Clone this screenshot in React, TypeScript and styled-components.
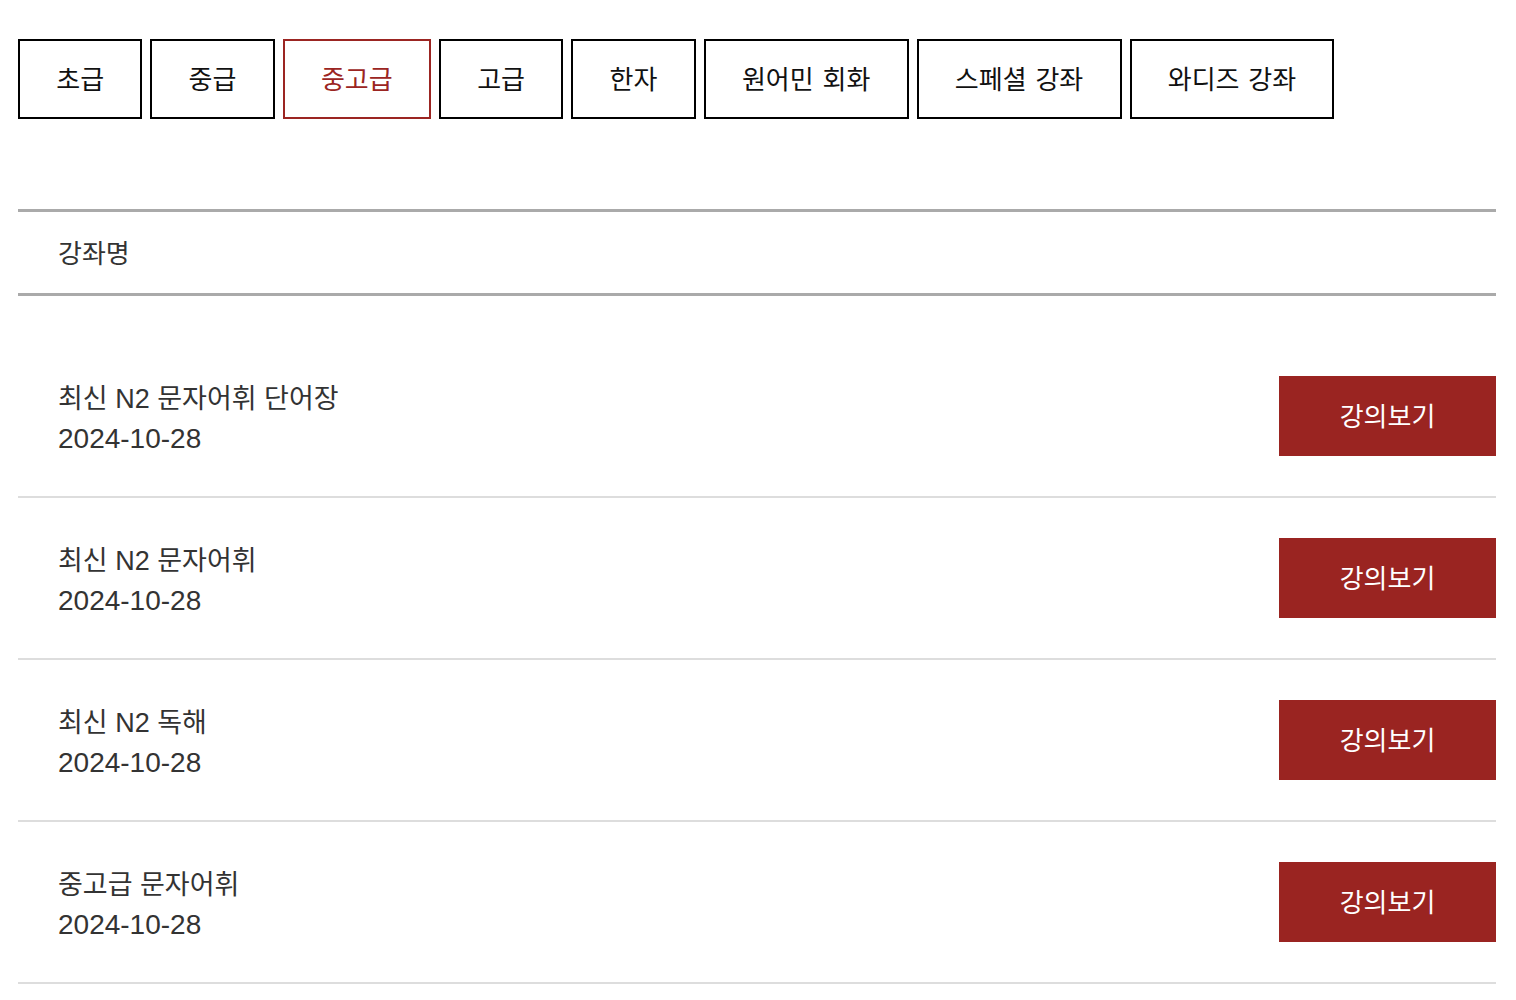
import React, { useState } from "react";
import styled, { createGlobalStyle } from "styled-components";

const GlobalStyle = createGlobalStyle`
  body {
    margin: 0;
    background: #fff;
    font-family: "Liberation Sans", "Noto Sans CJK KR", sans-serif;
  }
`;

const tabs = ["초급", "중급", "중고급", "고급", "한자", "원어민 회화", "스페셜 강좌", "와디즈 강좌"];

const lectures = [
  { title: "최신 N2 문자어휘 단어장", date: "2024-10-28" },
  { title: "최신 N2 문자어휘", date: "2024-10-28" },
  { title: "최신 N2 독해", date: "2024-10-28" },
  { title: "중고급 문자어휘", date: "2024-10-28" },
];

const App: React.FC = () => {
  const [active, setActive] = useState(2);
  return (
    <Page>
      <GlobalStyle />
      <TabBar>
        {tabs.map((t, i) => (
          <Tab key={t} $active={i === active} onClick={() => setActive(i)}>
            {t}
          </Tab>
        ))}
      </TabBar>
      <Table>
        <HeadRow>강좌명</HeadRow>
        <List>
          {lectures.map((l) => (
            <Row key={l.title}>
              <Info>
                <Title>{l.title}</Title>
                <DateText>{l.date}</DateText>
              </Info>
              <ViewButton>강의보기</ViewButton>
            </Row>
          ))}
        </List>
      </Table>
    </Page>
  );
};

const Page = styled.div`
  padding: 39px 20px 0 18px;
`;

const TabBar = styled.div`
  display: flex;
  gap: 8px;
`;

const Tab = styled.button<{ $active: boolean }>`
  height: 80px;
  padding: 0 36.25px 4px;
  background: #fff;
  border: 2px solid ${(p) => (p.$active ? "#9b2522" : "#000")};
  color: ${(p) => (p.$active ? "#9b2522" : "#111")};
  font-family: "Noto Sans CJK KR", sans-serif;
  font-size: 26px;
  word-spacing: 3px;
  cursor: pointer;
`;

const Table = styled.div`
  margin-top: 90px;
`;

const HeadRow = styled.div`
  box-sizing: border-box;
  height: 87px;
  display: flex;
  align-items: center;
  padding: 0 0 3px 40px;
  border-top: 3px solid #aaa;
  border-bottom: 3px solid #aaa;
  color: #333;
  font-size: 26px;
  font-family: "Noto Sans CJK KR", sans-serif;
`;

const List = styled.div`
  margin-top: 40px;
`;

const Row = styled.div`
  box-sizing: border-box;
  height: 162px;
  display: flex;
  align-items: center;
  justify-content: space-between;
  padding-left: 40px;
  border-bottom: 2px solid #ddd;
`;

const Info = styled.div`
  display: flex;
  flex-direction: column;
  padding-top: 5px;
  color: #333;
  font-size: 27px;
  line-height: 40px;
`;

const Title = styled.div``;

const DateText = styled.div`
  font-size: 28px;
`;

const ViewButton = styled.button`
  width: 217px;
  height: 80px;
  padding: 0 0 3px;
  border: none;
  background: #9a2421;
  color: #fff;
  font-family: "Noto Sans CJK KR", sans-serif;
  font-size: 26px;
  cursor: pointer;
`;

export default App;
